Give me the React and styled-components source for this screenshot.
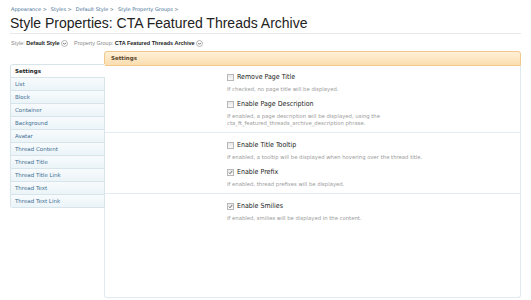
import React from 'react';
import styled, { createGlobalStyle } from 'styled-components';

const GlobalStyle = createGlobalStyle`
    body {
        margin: 0;
        background: #ffffff;
        font-family: 'DejaVu Sans', Verdana, sans-serif;
    }
`;

const tabs = [
    'List',
    'Block',
    'Container',
    'Background',
    'Avatar',
    'Thread Content',
    'Thread Title',
    'Thread Title Link',
    'Thread Text',
    'Thread Text Link',
];

const groups = [
    [
        { label: 'Remove Page Title', hint: ['If checked, no page title will be displayed.'] },
        {
            label: 'Enable Page Description',
            hint: [
                'If enabled, a page description will be displayed, using the',
                'cta_ft_featured_threads_archive_description phrase.',
            ],
        },
    ],
    [
        {
            label: 'Enable Title Tooltip',
            hint: ['If enabled, a tooltip will be displayed when hovering over the thread title.'],
        },
        { label: 'Enable Prefix', checked: true, hint: ['If enabled, thread prefixes will be displayed.'] },
    ],
    [{ label: 'Enable Smilies', checked: true, hint: ['If enabled, smilies will be displayed in the content.'] }],
];

const Chevron = () => (
    <ChevronIcon viewBox="0 0 8 8">
        <circle cx="4" cy="4" r="3.4" fill="#fff" stroke="#8a8a8a" strokeWidth="0.7" />
        <path d="M2.4 3.3 L4 4.9 L5.6 3.3" fill="none" stroke="#444" strokeWidth="0.9" />
    </ChevronIcon>
);

const CheckBox = ({ checked }) => (
    <Box>
        {checked && (
            <svg viewBox="0 0 8 8" width="7" height="7">
                <path d="M1.6 4.2 L3.2 6 L6.6 1.6" fill="none" stroke="#3b3b3b" strokeWidth="1.1" />
            </svg>
        )}
    </Box>
);

export default function App() {
    return (
        <Page>
            <GlobalStyle />
            <Crumbs>
                {['Appearance', 'Styles', 'Default Style', 'Style Property Groups'].map(c => (
                    <span key={c}>
                        {c} <Sep>&gt;</Sep>
                    </span>
                ))}
            </Crumbs>
            <Title>Style Properties: CTA Featured Threads Archive</Title>
            <Filters>
                <Filter>
                    <Muted>Style:</Muted> <b>Default Style</b>
                    <Chevron />
                </Filter>
                <Filter>
                    <Muted>Property Group:</Muted> <b>CTA Featured Threads Archive</b>
                    <Chevron />
                </Filter>
            </Filters>
            <Layout>
                <Tabs>
                    <Tab active>Settings</Tab>
                    {tabs.map(t => (
                        <Tab key={t}>{t}</Tab>
                    ))}
                </Tabs>
                <Panel>
                    <PanelHead>Settings</PanelHead>
                    <PanelBody>
                        {groups.map((g, i) => (
                            <Group key={i}>
                                {g.map(o => (
                                    <Option key={o.label}>
                                        <OptionLabel>
                                            <CheckBox checked={o.checked} />
                                            {o.label}
                                        </OptionLabel>
                                        <Hint>
                                            {o.hint.map(h => (
                                                <div key={h}>{h}</div>
                                            ))}
                                        </Hint>
                                    </Option>
                                ))}
                            </Group>
                        ))}
                    </PanelBody>
                </Panel>
            </Layout>
        </Page>
    );
}

const Page = styled.div`
    width: 531px;
    height: 300px;
    padding: 6px 10px 0 10px;
    box-sizing: border-box;
    overflow: hidden;
`;

const Crumbs = styled.div`
    display: flex;
    gap: 4px;
    height: 7px;
    padding-left: 1px;
    font-size: 5px;
    line-height: 7px;
    color: #3f6f94;
`;

const Sep = styled.span`
    color: #6b7c88;
`;

const Title = styled.h1`
    margin: 2px 0 0 0;
    padding: 0 0 1px 0;
    font-family: 'Liberation Sans', Arial, sans-serif;
    font-weight: normal;
    font-size: 14px;
    line-height: 17px;
    color: #222;
    border-bottom: 1px solid #e6e9ec;
`;

const Filters = styled.div`
    display: flex;
    gap: 6px;
    margin-top: 5px;
    padding-left: 1px;
    height: 8px;
    font-family: 'Liberation Sans', Arial, sans-serif;
    font-size: 5.5px;
    line-height: 8px;
    color: #222;
`;

const Filter = styled.span`
    display: flex;
    align-items: center;
    gap: 1.5px;
    white-space: pre;
`;

const Muted = styled.span`
    color: #888;
`;

const ChevronIcon = styled.svg`
    width: 7px;
    height: 7px;
`;

const Layout = styled.div`
    display: flex;
    align-items: flex-start;
    margin-top: 4px;
`;

const Tabs = styled.div`
    position: relative;
    z-index: 1;
    width: 94px;
    margin-top: 13px;
    margin-right: -1px;
    border-left: 1px solid #d7e5ea;
    border-bottom: 1px solid #d7e5ea;
    border-radius: 3px 0 0 3px;
    flex-shrink: 0;
`;

const Tab = styled.div`
    height: 12px;
    padding-left: 4px;
    font-size: 5.5px;
    line-height: 12px;
    font-weight: ${props => (props.active ? 'bold' : 'normal')};
    color: ${props => (props.active ? '#222' : '#3f6f94')};
    background: ${props => (props.active ? '#ffffff' : 'linear-gradient(#f8fbfd, #ebf4f8)')};
    border-top: 1px solid #d7e5ea;
    border-right: 1px solid ${props => (props.active ? '#ffffff' : '#d7e5ea')};
    border-top-left-radius: ${props => (props.active ? '3px' : '0')};
`;

const Panel = styled.div`
    width: 417px;
    height: 247px;
    display: flex;
    flex-direction: column;
`;

const PanelHead = styled.div`
    height: 13px;
    padding-left: 6px;
    font-size: 5.5px;
    font-weight: bold;
    line-height: 13px;
    color: #5a4630;
    background: linear-gradient(#fff0d6, #fbddb0);
    border: 1px solid #f1c98d;
    border-radius: 3px 3px 0 0;
`;

const PanelBody = styled.div`
    flex: 1;
    border: 1px solid #dfeaee;
    border-top: none;
    border-radius: 0 0 3px 3px;
`;

const Group = styled.div`
    padding: 7px 0 5.5px 122px;
    border-bottom: 1px solid #e3edf1;

    &:first-child {
        padding-top: 6px;
    }

    &:last-child {
        border-bottom: none;
    }
`;

const Option = styled.div`
    & + & {
        margin-top: 6.5px;
    }
`;

const OptionLabel = styled.div`
    display: flex;
    align-items: center;
    gap: 3px;
    height: 10px;
    font-family: 'DejaVu Sans Condensed', 'DejaVu Sans', sans-serif;
    font-size: 7px;
    color: #222;
`;

const Box = styled.span`
    display: inline-flex;
    align-items: center;
    justify-content: center;
    width: 7px;
    height: 7px;
    box-sizing: border-box;
    border: 1px solid #b8b8b8;
    background: linear-gradient(#e8e8e8, #fafafa);
`;

const Hint = styled.div`
    margin-top: 3.5px;
    font-size: 5.3px;
    line-height: 7px;
    color: #9a9a9a;
`;
